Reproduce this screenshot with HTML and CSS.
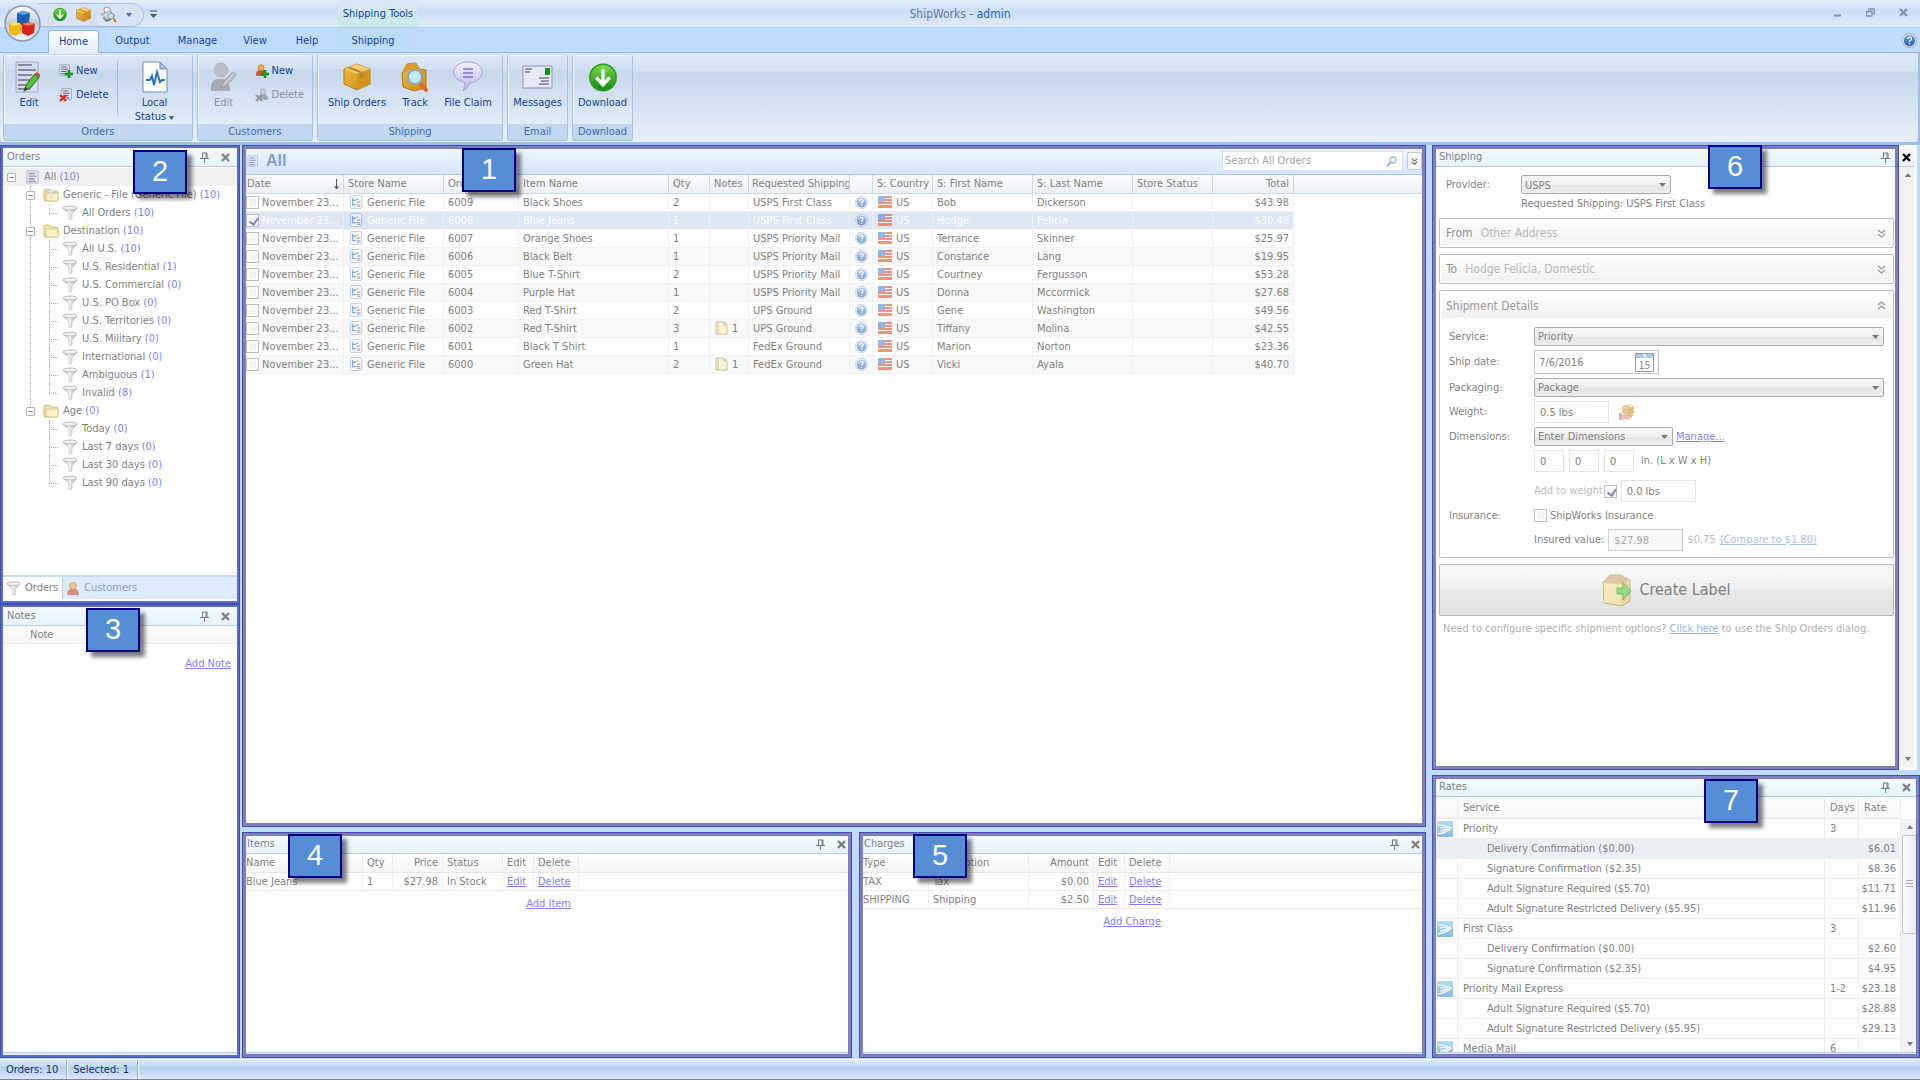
FILE: index.html
```html
<!DOCTYPE html>
<html lang="en">
<head>
<meta charset="utf-8">
<title>ShipWorks - admin</title>
<link rel="stylesheet" href="styles.css">
</head>
<body>
<svg class="defs" aria-hidden="true">
  <defs>
    <linearGradient id="gGreen" x1="0" y1="0" x2="0" y2="1"><stop offset="0" stop-color="#7bd94f"/><stop offset="1" stop-color="#128a10"/></linearGradient>
    <linearGradient id="gBox" x1="0" y1="0" x2="1" y2="1"><stop offset="0" stop-color="#f0bd4c"/><stop offset="1" stop-color="#c98a14"/></linearGradient>
    <linearGradient id="gOrb" x1="0" y1="0" x2="0" y2="1"><stop offset="0" stop-color="#fdfdfe"/><stop offset=".5" stop-color="#c3cbd9"/><stop offset="1" stop-color="#f4f7fb"/></linearGradient>
    <linearGradient id="gFun" x1="0" y1="0" x2="1" y2="0"><stop offset="0" stop-color="#8a8a8a"/><stop offset=".45" stop-color="#f2f2f2"/><stop offset="1" stop-color="#6f6f6f"/></linearGradient>
    <linearGradient id="gHelp" x1="0" y1="0" x2="0" y2="1"><stop offset="0" stop-color="#6aa5e6"/><stop offset="1" stop-color="#1c5aa8"/></linearGradient>
    <linearGradient id="gUsps" x1="0" y1="0" x2="0" y2="1"><stop offset="0" stop-color="#b3daf3"/><stop offset="1" stop-color="#84bbdf"/></linearGradient>
    <linearGradient id="gClaim" x1="0" y1="0" x2="0" y2="1"><stop offset="0" stop-color="#f6f3ff"/><stop offset="1" stop-color="#bdb2e8"/></linearGradient>
  </defs>
  <symbol id="down" viewBox="0 0 28 28"><circle cx="14" cy="14" r="13.5" fill="#2f9e25"/><circle cx="14" cy="14" r="12" fill="url(#gGreen)"/><path d="M14 6v14M7.500 14l6.500 7 6.500-7" fill="none" stroke="#fff" stroke-width="3.200"/></symbol>
  <symbol id="box" viewBox="0 0 28 28"><path d="M1 6 14 1l13 5v15L14 27 1 21z" fill="url(#gBox)" stroke="#b57a14"/><path d="M1 6l13 5 13-5-13-5z" fill="#f3cd72"/><path d="M14 11v16l13-6V6z" fill="#d09420"/><path d="M7 4l13 5v5l-3 1v-5L4 5z" fill="#b98424"/></symbol>
  <symbol id="track" viewBox="0 0 28 30"><path d="M1 12 6 2l9-1 3 6 7 1v18l-12 3-11-4z" fill="url(#gBox)" stroke="#b57a14"/><path d="M1 12 6 2l9-1 3 6-10 1z" fill="#d99c27"/><path d="M18 20l7 8" stroke="#e0662a" stroke-width="4" stroke-linecap="round"/><circle cx="14" cy="15" r="7" fill="#c4e9fa" stroke="#8fa9bc" stroke-width="2"/></symbol>
  <symbol id="doc" viewBox="0 0 16 16"><path d="M1 1h13v14H1z" fill="#dfe3f2" stroke="#9298b5"/><path d="M3 4h7M3 7h9M3 10h7M3 13h8" stroke="#5d628a" stroke-width="1.500"/></symbol>
  <symbol id="plus" viewBox="0 0 8 8"><path d="M3 0h2v3h3v2H5v3H3V5H0V3h3z" fill="#23a31b" stroke="#0b6a0b" stroke-width=".5"/></symbol>
  <symbol id="cross" viewBox="0 0 8 8"><path d="M1 1l6 6M7 1L1 7" stroke="#d8321c" stroke-width="2.400"/></symbol>
  <symbol id="pencil" viewBox="0 0 16 20"><path d="M1 19l2-6L11 3l4 3L7 16z" fill="#56c33c" stroke="#2b7b1e"/><path d="M11 3l2-2 4 3-2 2z" fill="#e2442c"/><path d="M1 19l1-4 2 2z" fill="#333"/></symbol>
  <symbol id="man" viewBox="0 0 16 16"><path d="M2 15q0-6 4-6h4q4 0 4 6z" fill="#dd5326" stroke="#a83c18"/><circle cx="8" cy="5" r="4" fill="#f5b04c" stroke="#b1701d"/></symbol>
  <symbol id="folder" viewBox="0 0 16 14"><path d="M1 3q0-2 2-2h3l2 2h6l1 1v8q0 1-1 1H2q-1 0-1-1z" fill="#e8cf6c" stroke="#b09232"/><path d="M3 5h12v8H3z" fill="#f9eba6" stroke="#bfa345"/></symbol>
  <symbol id="funnel" viewBox="0 0 16 16"><path d="M1 3l6 6v6l3-1V9l5-6z" fill="url(#gFun)" stroke="#777" stroke-width=".5"/><ellipse cx="8" cy="3" rx="7" ry="2" fill="#e6e6e6" stroke="#777" stroke-width=".8"/></symbol>
  <symbol id="store" viewBox="0 0 14 16"><rect x=".5" y=".5" width="13" height="15" rx="2" fill="#fff" stroke="#6f9ad0"/><path d="M3 3v8h4M3 6h4" fill="none" stroke="#1272d6" stroke-width="1.500"/><path d="M7 5h3M8 8h4M8 11h4M8 13h4" stroke="#777" stroke-width="1.500"/></symbol>
  <symbol id="help" viewBox="0 0 16 16"><circle cx="8" cy="8" r="7.500" fill="#eef2f8" stroke="#93a5bf"/><circle cx="8" cy="8" r="6" fill="url(#gHelp)"/><path d="M6 6.500q0-2 2-2t2 1.800q0 1-2 2.200v.7M8 10.500v1.600" fill="none" stroke="#fff" stroke-width="1.500"/></symbol>
  <symbol id="flag" viewBox="0 0 14 12"><path d="M0 0h14v12H0z" fill="#fff"/><path d="M0 1h14M0 4h14M0 7h14M0 10h14M0 12h14" stroke="#ee3b1c" stroke-width="1.800"/><path d="M0 0h7v6H0z" fill="#3b82cf"/></symbol>
  <symbol id="note" viewBox="0 0 13 14"><path d="M1 1h8l3 3v9H1z" fill="#fbf2b0" stroke="#9d9660"/><path d="M3 2v11" stroke="#a6a06e"/><path d="M9 1v3h3" fill="none" stroke="#9d9660"/></symbol>
  <symbol id="pin" viewBox="0 0 9 11"><path d="M2.500 1v5M6 1v5M7 1v5M2 1h5M0 6.500h9M4.500 7v4" fill="none" stroke="#777"/></symbol>
  <symbol id="close" viewBox="0 0 9 9"><path d="M1 1l7 7M8 1L1 8" stroke="currentColor" stroke-width="2.400"/></symbol>
  <symbol id="chev" viewBox="0 0 9 9"><path d="M1 1l3.500 3L8 1M1 5l3.500 3L8 5" fill="none" stroke="currentColor" stroke-width="1.300"/></symbol>
  <symbol id="usps" viewBox="0 0 16 16"><rect width="16" height="16" rx="1" fill="url(#gUsps)"/><path d="M1 4q8 0 13 3-5 5-13 6M3 7q5-1 8 0-3 3-8 3" fill="none" stroke="#fff" stroke-width="1.200"/></symbol>
  <symbol id="arrow" viewBox="0 0 6 4"><path d="M0 0h6L3 4z" fill="currentColor"/></symbol>
</svg>

<div class="app">
  <header class="top">
    <div class="titlebar">
      <button class="orb" aria-label="Application menu"><svg width="37" height="37" viewBox="0 0 37 37"><circle cx="18.500" cy="18.500" r="17.500" fill="url(#gOrb)" stroke="#8a9ab5" stroke-width="1.500"/><path d="M13 8l6-2 7 2-1 10-6 3-6-3z" fill="#1d5fb8"/><path d="M13 8l6-2 7 2-7 2z" fill="#5f9be4"/><path d="M5 19l6-2 6 2v9l-6 3-6-3z" fill="#f2b818"/><path d="M5 19l6-2 6 2-6 2z" fill="#fde36c"/><path d="M18 19l7-2 6 2-1 9-6 3-6-3z" fill="#d0271d"/><path d="M18 19l7-2 6 2-7 2z" fill="#f4776a"/></svg></button>
      <div class="quick">
        <button aria-label="Download"><svg width="14" height="15"><use href="#down"/></svg></button>
        <button aria-label="Ship"><svg width="15" height="15"><use href="#box"/></svg></button>
        <button aria-label="Preview"><svg width="17" height="16" viewBox="0 0 17 16"><path d="M4 1l5-1 2 5-6 2z" fill="#fff" stroke="#999"/><path d="M1 7l9-3 5 5-7 4z" fill="#d7dae0" stroke="#999"/><path d="M3 11l4 3 4-2" fill="none" stroke="#777" stroke-width="1.500"/><path d="M13 11l3 4" stroke="#e0662a" stroke-width="2"/><circle cx="11" cy="9" r="3" fill="#c4e9fa" stroke="#7892a6"/></svg></button>
        <svg width="6" height="4"><use href="#arrow"/></svg>
      </div>
      <svg class="more" width="7" height="8" viewBox="0 0 7 8"><path d="M0 1h7" stroke="#456"/><path d="M0 4h7L3.500 8z" fill="#456"/></svg>
      <div class="context">Shipping Tools</div>
      <h1>ShipWorks - <span>admin</span></h1>
      <div class="winbtns">
        <button aria-label="Minimize"><svg width="9" height="9" viewBox="0 0 9 9"><path d="M1 7.500h7" stroke="#7d93b2" stroke-width="2"/></svg></button>
        <button aria-label="Restore"><svg width="9" height="9" viewBox="0 0 9 9"><path d="M3 2.500V1h5.500v4.500H7M.5 3.500H6V8H.5z" fill="none" stroke="#7d93b2" stroke-width="1.400"/></svg></button>
        <button aria-label="Close"><svg width="9" height="9"><use href="#close"/></svg></button>
      </div>
    </div>
    <nav class="tabs">
      <button class="on">Home</button><button class="w67">Output</button><button class="w63">Manage</button><button class="w52">View</button><button class="w52">Help</button><button class="ctx">Shipping</button>
      <svg class="q" width="15" height="15"><use href="#help"/></svg>
    </nav>
    <div class="ribbon">
      <section class="grp">
        <div class="tools">
          <button class="big wa"><svg width="28" height="32" viewBox="0 0 28 32"><path d="M1 1h22v30H1z" fill="#d9dcec" stroke="#a4a8c0"/><path d="M3 4h14M3 9h18M3 14h14M3 19h14M3 24h9M3 28h12" stroke="#6b6f92" stroke-width="1.600"/><use href="#pencil" x="8" y="10" width="17" height="21"/></svg>Edit</button>
          <div class="pair">
            <button><svg width="14" height="16" viewBox="0 0 14 16"><use href="#doc" width="12" height="14"/><use href="#plus" x="6" y="7" width="8" height="8"/></svg>New</button>
            <button><svg width="14" height="16" viewBox="0 0 14 16"><use href="#doc" x="2" width="12" height="14"/><use href="#cross" y="7" width="8" height="8"/></svg>Delete</button>
          </div>
          <i class="sep"></i>
          <button class="big wb"><svg width="26" height="32" viewBox="0 0 26 32"><path d="M1 1h17l7 7v23H1z" fill="#fff" stroke="#7389b0"/><path d="M18 1v7h7z" fill="#a9c3ea" stroke="#7389b0"/><path d="M4 19h4l2-4 2 9 3-13 3 10 2-2h3" fill="none" stroke="#2272c2" stroke-width="2"/></svg><span>Local<br>Status <svg width="5" height="4"><use href="#arrow"/></svg></span></button>
        </div>
        <h2>Orders</h2>
      </section>
      <section class="grp">
        <div class="tools">
          <button class="big wc" disabled><svg width="28" height="32" viewBox="0 0 28 32"><path d="M1 30q-1-12 7-12h6q6 0 6 12z" fill="#a9adb3"/><circle cx="11" cy="9" r="7.500" fill="#b9bdc3"/><path d="M11 27l3-7 9-9 3 3-9 10z" fill="#c4c8cd" stroke="#989da4"/></svg>Edit</button>
          <div class="pair">
            <button><svg width="14" height="16" viewBox="0 0 14 16"><use href="#man" width="12" height="14"/><use href="#plus" x="6" y="7" width="8" height="8"/></svg>New</button>
            <button disabled><svg class="gray" width="14" height="16" viewBox="0 0 14 16"><use href="#man" x="2" width="12" height="14"/><use href="#cross" y="7" width="8" height="8"/></svg>Delete</button>
          </div>
        </div>
        <h2>Customers</h2>
      </section>
      <section class="grp">
        <div class="tools">
          <button class="big wd"><svg width="30" height="32"><use href="#box" y="2" height="28"/></svg>Ship Orders</button>
          <button class="big we"><svg width="28" height="32"><use href="#track"/></svg>Track</button>
          <button class="big wf"><svg width="30" height="32" viewBox="0 0 30 32"><path d="M15 1c19 0 18 20 1 21q-1 6-6 8 3-5 1-9C-5 17-1 1 15 1z" fill="url(#gClaim)" stroke="#a99ddb"/><path d="M10 8h10M10 12h10M10 16h10" stroke="#8172c4" stroke-width="1.500"/></svg>File Claim</button>
        </div>
        <h2>Shipping</h2>
      </section>
      <section class="grp">
        <div class="tools">
          <button class="big wg"><svg width="32" height="32" viewBox="0 0 32 32"><path d="M1 5h29v22H1z" fill="#e6e8f4" stroke="#8b90b0"/><path d="M3 8h7M3 11h5M17 17h10M19 20h8M17 23h10" stroke="#777c99" stroke-width="1.500"/><path d="M23 7h5v7h-5z" fill="#189018"/></svg>Messages</button>
        </div>
        <h2>Email</h2>
      </section>
      <section class="grp">
        <div class="tools">
          <button class="big wg"><svg width="30" height="32"><use href="#down" y="2" height="29"/></svg>Download</button>
        </div>
        <h2>Download</h2>
      </section>
    </div>
  </header>

  <main>
    <div class="col left">
      <section class="pane">
        <header class="bar"><h3>Orders</h3><button aria-label="Pin"><svg width="9" height="11"><use href="#pin"/></svg></button><button aria-label="Close"><svg width="9" height="9"><use href="#close"/></svg></button></header>
        <div class="tree grow">
          <div class="node root"><i></i><svg width="14" height="14"><use href="#doc"/></svg><span>All <b>(10)</b></span></div>
          <ul>
            <li><div class="node"><i></i><svg width="16" height="15" viewBox="0 0 16 15"><use href="#folder" width="16" height="14"/><use href="#funnel" x="3" y="1" width="10" height="10"/></svg><span>Generic - File (Generic File) <b>(10)</b></span></div>
              <ul><li><div class="node"><svg width="16" height="16"><use href="#funnel"/></svg><span>All Orders <b>(10)</b></span></div></li></ul></li>
            <li><div class="node"><i></i><svg width="16" height="14"><use href="#folder"/></svg><span>Destination <b>(10)</b></span></div>
              <ul>
                <li><div class="node"><svg width="16" height="16"><use href="#funnel"/></svg><span>All U.S. <b>(10)</b></span></div></li>
                <li><div class="node"><svg width="16" height="16"><use href="#funnel"/></svg><span>U.S. Residential <b>(1)</b></span></div></li>
                <li><div class="node"><svg width="16" height="16"><use href="#funnel"/></svg><span>U.S. Commercial <b>(0)</b></span></div></li>
                <li><div class="node"><svg width="16" height="16"><use href="#funnel"/></svg><span>U.S. PO Box <b>(0)</b></span></div></li>
                <li><div class="node"><svg width="16" height="16"><use href="#funnel"/></svg><span>U.S. Territories <b>(0)</b></span></div></li>
                <li><div class="node"><svg width="16" height="16"><use href="#funnel"/></svg><span>U.S. Military <b>(0)</b></span></div></li>
                <li><div class="node"><svg width="16" height="16"><use href="#funnel"/></svg><span>International <b>(0)</b></span></div></li>
                <li><div class="node"><svg width="16" height="16"><use href="#funnel"/></svg><span>Ambiguous <b>(1)</b></span></div></li>
                <li><div class="node"><svg width="16" height="16"><use href="#funnel"/></svg><span>Invalid <b>(8)</b></span></div></li>
              </ul></li>
            <li><div class="node"><i></i><svg width="16" height="14"><use href="#folder"/></svg><span>Age <b>(0)</b></span></div>
              <ul>
                <li><div class="node"><svg width="16" height="16"><use href="#funnel"/></svg><span>Today <b>(0)</b></span></div></li>
                <li><div class="node"><svg width="16" height="16"><use href="#funnel"/></svg><span>Last 7 days <b>(0)</b></span></div></li>
                <li><div class="node"><svg width="16" height="16"><use href="#funnel"/></svg><span>Last 30 days <b>(0)</b></span></div></li>
                <li><div class="node"><svg width="16" height="16"><use href="#funnel"/></svg><span>Last 90 days <b>(0)</b></span></div></li>
              </ul></li>
          </ul>
        </div>
        <div class="ptabs"><button class="on"><svg width="15" height="15"><use href="#funnel"/></svg>Orders</button><button><svg width="14" height="15"><use href="#man"/></svg>Customers</button></div>
        <div class="badge b2">2</div>
      </section>
      <section class="pane">
        <header class="bar"><h3>Notes</h3><button aria-label="Pin"><svg width="9" height="11"><use href="#pin"/></svg></button><button aria-label="Close"><svg width="9" height="9"><use href="#close"/></svg></button></header>
        <div class="grow">
          <div class="notehead"><span>Note</span></div>
          <p class="addnote"><a href="#">Add Note</a></p>
        </div>
        <div class="foot"></div>
        <div class="badge b3">3</div>
      </section>
    </div>

    <div class="col center">
      <section class="pane">
        <header class="allbar"><svg width="12" height="14"><use href="#doc"/></svg><h3>All</h3>
          <label class="search"><input type="text" placeholder="Search All Orders" aria-label="Search All Orders"><svg width="11" height="11" viewBox="0 0 11 11"><circle cx="7" cy="4" r="3" fill="#e4f0fb" stroke="#6a94c6" stroke-width="1.400"/><path d="M5 6L1 10" stroke="#5a80b0" stroke-width="1.800"/></svg></label>
          <button class="expand" aria-label="Advanced"><svg width="7" height="9"><use href="#chev"/></svg></button></header>
        <div class="grow">
          <table class="orders">
            <colgroup><col class="c97"><col class="c100"><col class="c75"><col class="c150"><col class="c41"><col class="c39"><col class="c101"><col class="c23"><col class="c60"><col class="c100"><col class="c100"><col class="c80"><col class="c81"><col></colgroup>
            <thead><tr><th class="sorted">Date<svg width="5" height="11" viewBox="0 0 5 11"><path d="M2.500 0v9M.5 7l2 3 2-3" fill="none" stroke="#555"/></svg></th><th>Store Name</th><th>Order #</th><th>Item Name</th><th>Qty</th><th>Notes</th><th class="snug">Requested Shipping</th><th></th><th>S: Country</th><th>S: First Name</th><th>S: Last Name</th><th>Store Status</th><th class="r">Total</th><th></th></tr></thead>
            <tbody>
              <tr><td><label><input type="checkbox">November 23...</label></td><td><svg width="14" height="14"><use href="#store"/></svg>Generic File</td><td>6009</td><td>Black Shoes</td><td>2</td><td></td><td>USPS First Class</td><td><svg width="13" height="13"><use href="#help"/></svg></td><td><svg width="14" height="12"><use href="#flag"/></svg>US</td><td>Bob</td><td>Dickerson</td><td></td><td class="r">$43.98</td><td></td></tr>
              <tr class="sel"><td><label><input type="checkbox" checked>November 23...</label></td><td><svg width="14" height="14"><use href="#store"/></svg>Generic File</td><td>6008</td><td>Blue Jeans</td><td>1</td><td></td><td>USPS First Class</td><td><svg width="13" height="13"><use href="#help"/></svg></td><td><svg width="14" height="12"><use href="#flag"/></svg>US</td><td>Hodge</td><td>Felicia</td><td></td><td class="r">$30.48</td><td></td></tr>
              <tr><td><label><input type="checkbox">November 23...</label></td><td><svg width="14" height="14"><use href="#store"/></svg>Generic File</td><td>6007</td><td>Orange Shoes</td><td>1</td><td></td><td>USPS Priority Mail</td><td><svg width="13" height="13"><use href="#help"/></svg></td><td><svg width="14" height="12"><use href="#flag"/></svg>US</td><td>Terrance</td><td>Skinner</td><td></td><td class="r">$25.97</td><td></td></tr>
              <tr><td><label><input type="checkbox">November 23...</label></td><td><svg width="14" height="14"><use href="#store"/></svg>Generic File</td><td>6006</td><td>Black Belt</td><td>1</td><td></td><td>USPS Priority Mail</td><td><svg width="13" height="13"><use href="#help"/></svg></td><td><svg width="14" height="12"><use href="#flag"/></svg>US</td><td>Constance</td><td>Lang</td><td></td><td class="r">$19.95</td><td></td></tr>
              <tr><td><label><input type="checkbox">November 23...</label></td><td><svg width="14" height="14"><use href="#store"/></svg>Generic File</td><td>6005</td><td>Blue T-Shirt</td><td>2</td><td></td><td>USPS Priority Mail</td><td><svg width="13" height="13"><use href="#help"/></svg></td><td><svg width="14" height="12"><use href="#flag"/></svg>US</td><td>Courtney</td><td>Fergusson</td><td></td><td class="r">$53.28</td><td></td></tr>
              <tr><td><label><input type="checkbox">November 23...</label></td><td><svg width="14" height="14"><use href="#store"/></svg>Generic File</td><td>6004</td><td>Purple Hat</td><td>1</td><td></td><td>USPS Priority Mail</td><td><svg width="13" height="13"><use href="#help"/></svg></td><td><svg width="14" height="12"><use href="#flag"/></svg>US</td><td>Donna</td><td>Mccormick</td><td></td><td class="r">$27.68</td><td></td></tr>
              <tr><td><label><input type="checkbox">November 23...</label></td><td><svg width="14" height="14"><use href="#store"/></svg>Generic File</td><td>6003</td><td>Red T-Shirt</td><td>2</td><td></td><td>UPS Ground</td><td><svg width="13" height="13"><use href="#help"/></svg></td><td><svg width="14" height="12"><use href="#flag"/></svg>US</td><td>Gene</td><td>Washington</td><td></td><td class="r">$49.56</td><td></td></tr>
              <tr><td><label><input type="checkbox">November 23...</label></td><td><svg width="14" height="14"><use href="#store"/></svg>Generic File</td><td>6002</td><td>Red T-Shirt</td><td>3</td><td><svg width="13" height="14"><use href="#note"/></svg>1</td><td>UPS Ground</td><td><svg width="13" height="13"><use href="#help"/></svg></td><td><svg width="14" height="12"><use href="#flag"/></svg>US</td><td>Tiffany</td><td>Molina</td><td></td><td class="r">$42.55</td><td></td></tr>
              <tr><td><label><input type="checkbox">November 23...</label></td><td><svg width="14" height="14"><use href="#store"/></svg>Generic File</td><td>6001</td><td>Black T Shirt</td><td>1</td><td></td><td>FedEx Ground</td><td><svg width="13" height="13"><use href="#help"/></svg></td><td><svg width="14" height="12"><use href="#flag"/></svg>US</td><td>Marion</td><td>Norton</td><td></td><td class="r">$23.36</td><td></td></tr>
              <tr><td><label><input type="checkbox">November 23...</label></td><td><svg width="14" height="14"><use href="#store"/></svg>Generic File</td><td>6000</td><td>Green Hat</td><td>2</td><td><svg width="13" height="14"><use href="#note"/></svg>1</td><td>FedEx Ground</td><td><svg width="13" height="13"><use href="#help"/></svg></td><td><svg width="14" height="12"><use href="#flag"/></svg>US</td><td>Vicki</td><td>Ayala</td><td></td><td class="r">$40.70</td><td></td></tr>
            </tbody>
          </table>
        </div>
        <div class="badge b1">1</div>
      </section>
      <div class="pairrow">
        <section class="pane">
          <header class="bar"><h3>Items</h3><button aria-label="Pin"><svg width="9" height="11"><use href="#pin"/></svg></button><button aria-label="Close"><svg width="9" height="9"><use href="#close"/></svg></button></header>
          <div class="grow">
            <table class="mini">
              <colgroup><col class="c117"><col class="c30"><col class="c50"><col class="c60"><col class="c31"><col class="c45"><col></colgroup>
              <thead><tr><th>Name</th><th>Qty</th><th class="r">Price</th><th>Status</th><th>Edit</th><th>Delete</th><th></th></tr></thead>
              <tbody><tr><td>Blue Jeans</td><td>1</td><td class="r">$27.98</td><td>In Stock</td><td><a href="#">Edit</a></td><td><a href="#">Delete</a></td><td></td></tr></tbody>
            </table>
            <p class="additem"><a href="#">Add Item</a></p>
          </div>
          <div class="foot"></div>
          <div class="badge b4">4</div>
        </section>
        <section class="pane">
          <header class="bar"><h3>Charges</h3><button aria-label="Pin"><svg width="9" height="11"><use href="#pin"/></svg></button><button aria-label="Close"><svg width="9" height="9"><use href="#close"/></svg></button></header>
          <div class="grow">
            <table class="mini">
              <colgroup><col class="c66"><col class="c100"><col class="c65"><col class="c31"><col class="c45"><col></colgroup>
              <thead><tr><th>Type</th><th>Description</th><th class="r">Amount</th><th>Edit</th><th>Delete</th><th></th></tr></thead>
              <tbody><tr><td>TAX</td><td>Tax</td><td class="r">$0.00</td><td><a href="#">Edit</a></td><td><a href="#">Delete</a></td><td></td></tr>
              <tr><td>SHIPPING</td><td>Shipping</td><td class="r">$2.50</td><td><a href="#">Edit</a></td><td><a href="#">Delete</a></td><td></td></tr></tbody>
            </table>
            <p class="addcharge"><a href="#">Add Charge</a></p>
          </div>
          <div class="foot"></div>
          <div class="badge b5">5</div>
        </section>
      </div>
    </div>

    <div class="col right">
      <section class="pane ship">
        <header class="bar"><h3>Shipping</h3><button aria-label="Pin"><svg width="9" height="11"><use href="#pin"/></svg></button><button class="dark" aria-label="Close"><svg width="9" height="9"><use href="#close"/></svg></button></header>
        <div class="scroller grow">
          <div class="form">
            <div class="prov"><label for="prov">Provider:</label><div><select id="prov"><option>USPS</option></select><p>Requested Shipping: USPS First Class</p></div></div>
            <button class="fold"><span>From</span><em>Other Address</em><svg width="9" height="9"><use href="#chev"/></svg></button>
            <button class="fold"><span>To</span><em>Hodge Felicia, Domestic</em><svg width="9" height="9"><use href="#chev"/></svg></button>
            <div class="details">
              <div class="dhead"><span>Shipment Details</span><svg class="flip" width="9" height="9"><use href="#chev"/></svg></div>
              <div class="fields">
                <div class="f"><label for="svc">Service:</label><select id="svc"><option>Priority</option></select></div>
                <div class="f date"><label for="sd">Ship date:</label><div class="datebox"><input id="sd" type="text" value="7/6/2016"><svg width="19" height="19" viewBox="0 0 19 19"><path d="M.5.5h18v18H.5z" fill="#fff" stroke="#999"/><path d="M1 1h17v4H1z" fill="#a9cbe6"/><circle cx="9.500" cy="2.500" r="1.200" fill="#fff"/><text x="9.500" y="15.500" text-anchor="middle" class="cal">15</text></svg></div></div>
                <div class="f"><label for="pk">Packaging:</label><select id="pk"><option>Package</option></select></div>
                <div class="f"><label for="wt">Weight:</label><input id="wt" class="w75" type="text" value="0.5 lbs"><svg class="scale" width="17" height="16" viewBox="0 0 17 16"><use href="#box" x="2" width="14" height="12"/><path d="M1 12q4-2 7 0l6-1-4 4H1z" fill="#f0a27a" stroke="#b5562c" stroke-width=".7"/><path d="M0 9h3v7H0z" fill="#8a96a8"/></svg></div>
                <div class="f"><label for="dm">Dimensions:</label><select id="dm" class="w139"><option>Enter Dimensions</option></select><a href="#" class="manage">Manage...</a></div>
                <div class="f dims"><span class="lab"></span><input type="text" value="0" aria-label="Length"><input type="text" value="0" aria-label="Width"><input type="text" value="0" aria-label="Height"><span>in. (L x W x H)</span></div>
                <div class="f addw"><span class="lab"></span><label class="muted inl">Add to weight<input type="checkbox" checked></label><input class="w75" type="text" value="0.0 lbs" aria-label="Added weight"></div>
                <div class="f"><span class="lab">Insurance:</span><label class="inl swi"><input type="checkbox">ShipWorks Insurance</label></div>
                <div class="f val"><span class="lab"></span><label for="iv" class="inl">Insured value:</label><input id="iv" class="w75" type="text" value="$27.98" disabled><span class="muted">$0.75</span><a href="#" class="cmp">(Compare to $1.80)</a></div>
              </div>
            </div>
            <button class="create"><svg width="30" height="34" viewBox="0 0 30 34"><path d="M1 9 8 2h10l10 5v21l-8 5-18-3z" fill="#eecb70" stroke="#b98f3a"/><path d="M1 9 8 2h10l10 5-8 4z" fill="#c9ac73"/><path d="M2 10l17 2v20L2 29z" fill="#fbe59b"/><path d="M15 15h6v-6l8 9-8 9v-6h-6z" fill="#5cd046" stroke="#3a9a2b"/></svg>Create Label</button>
            <p class="need">Need to configure specific shipment options? <a href="#">Click here</a> to use the Ship Orders dialog.</p>
          </div>
          <div class="sb"><svg width="6" height="4" class="flip"><use href="#arrow"/></svg><svg width="6" height="4"><use href="#arrow"/></svg></div>
        </div>
        <div class="badge b6">6</div>
      </section>
      <section class="pane rates">
        <header class="bar"><h3>Rates</h3><button aria-label="Pin"><svg width="9" height="11"><use href="#pin"/></svg></button><button aria-label="Close"><svg width="9" height="9"><use href="#close"/></svg></button></header>
        <div class="scroller grow">
          <div class="clip">
          <table class="rt">
            <colgroup><col class="c26"><col><col class="c34"><col class="c42"></colgroup>
            <thead><tr><th></th><th>Service</th><th>Days</th><th>Rate</th></tr></thead>
            <tbody>
              <tr><td><svg width="16" height="16"><use href="#usps"/></svg></td><td>Priority</td><td>3</td><td></td></tr>
              <tr class="sel"><td></td><td class="in">Delivery Confirmation ($0.00)</td><td></td><td>$6.01</td></tr>
              <tr><td></td><td class="in">Signature Confirmation ($2.35)</td><td></td><td>$8.36</td></tr>
              <tr><td></td><td class="in">Adult Signature Required ($5.70)</td><td></td><td>$11.71</td></tr>
              <tr><td></td><td class="in">Adult Signature Restricted Delivery ($5.95)</td><td></td><td>$11.96</td></tr>
              <tr><td><svg width="16" height="16"><use href="#usps"/></svg></td><td>First Class</td><td>3</td><td></td></tr>
              <tr><td></td><td class="in">Delivery Confirmation ($0.00)</td><td></td><td>$2.60</td></tr>
              <tr><td></td><td class="in">Signature Confirmation ($2.35)</td><td></td><td>$4.95</td></tr>
              <tr><td><svg width="16" height="16"><use href="#usps"/></svg></td><td>Priority Mail Express</td><td>1-2</td><td>$23.18</td></tr>
              <tr><td></td><td class="in">Adult Signature Required ($5.70)</td><td></td><td>$28.88</td></tr>
              <tr><td></td><td class="in">Adult Signature Restricted Delivery ($5.95)</td><td></td><td>$29.13</td></tr>
              <tr><td><svg width="16" height="16"><use href="#usps"/></svg></td><td>Media Mail</td><td>6</td><td></td></tr>
            </tbody>
          </table>
          </div>
          <div class="sb"><svg width="6" height="4" class="flip"><use href="#arrow"/></svg><i class="thumb"></i><svg width="6" height="4"><use href="#arrow"/></svg></div>
        </div>
        <div class="foot"></div>
        <div class="badge b7">7</div>
      </section>
    </div>
  </main>

  <footer class="status"><span>Orders: 10</span><span>Selected: 1</span></footer>
</div>
</body>
</html>
```
FILE: styles.css
```css
* { box-sizing: border-box; }
body { margin: 0; font: 11px/14px "DejaVu Sans Condensed", "DejaVu Sans", sans-serif; color: #7f7f7f; }
button, input, select { font: inherit; color: inherit; margin: 0; padding: 0; }
button { border: 0; background: none; }
h1, h2, h3, p, ul { margin: 0; padding: 0; font-size: 11px; font-weight: normal; }
ul { list-style: none; }
a { color: #7f7fff; }
svg { flex: none; }
.defs { position: absolute; width: 0; height: 0; }
.app { height: 100vh; display: flex; flex-direction: column; background: #bfdbff; overflow: hidden; }

/* Title bar and ribbon */
.top { color: #15428b; background: #9fbfe8; padding-bottom: 3px; }
.titlebar { position: relative; display: flex; align-items: center; height: 28px; border-bottom: 1px solid #b0cff7; background: linear-gradient(#e4effd, #cadef7 40%, #dfebfa); }
.orb { position: absolute; left: 4px; top: 5px; z-index: 2; height: 37px; }
.quick { display: flex; align-items: center; gap: 9px; height: 24px; margin: 3px 0 0 38px; padding: 0 11px 0 15px; border: 1px solid #a9c0de; border-left: 0; border-radius: 0 12px 12px 0; background: #d5e3f5; color: #5b7396; }
.quick button { height: 16px; }
.more { margin-left: 6px; }
.context { display: flex; align-items: center; justify-content: center; width: 80px; height: 27px; margin-left: 181px; background: linear-gradient(#d9e9fa, #c9e9e8); white-space: nowrap; }
h1 { position: absolute; left: 0; right: 0; top: 7px; text-align: center; font-size: 12px; color: #66788f; pointer-events: none; }
h1 span { color: #2463a8; }
.winbtns { display: flex; gap: 24px; margin-left: auto; padding-right: 12px; color: #7d93b2; }
.winbtns button { width: 9px; height: 20px; }
.tabs { display: flex; align-items: flex-end; height: 25px; padding-left: 48px; background: #bfdbff; border-bottom: 1px solid #8db2e3; }
.tabs button { height: 24px; padding-top: 2px; }
.tabs .on { width: 51px; height: 23px; padding-top: 0; border: 1px solid #8fb6e8; border-bottom: 0; border-radius: 3px 3px 0 0; background: linear-gradient(#fff, #e3edfa); margin-bottom: -1px; }
.w67 { width: 67px; }
.w63 { width: 63px; }
.w52 { width: 52px; }
.tabs .ctx { width: 80px; background: #bddcf8; }
.tabs .q { margin: 0 3px 4px auto; }
.ribbon { display: flex; gap: 4px; height: 89px; padding: 1px 3px 0; border-radius: 0 0 3px 3px; background: linear-gradient(#e1eaf5, #d3e1f1 18px, #c5d7ec 19px, #e8eff8); border-bottom: 1px solid #eef4fb; margin-right: 2px; }
.grp { display: flex; flex-direction: column; border: 1px solid #a5c1e2; border-top-color: #c6d7ea; border-radius: 3px; overflow: hidden; }
.tools { display: flex; flex: 1; align-items: flex-start; padding-top: 6px; background: linear-gradient(#dee8f5, #d1dfef 14px, #c7d8ed 15px, #e0ebf7); box-shadow: inset 1px 1px #f2f6fb; }
.grp h2 { height: 16px; line-height: 16px; text-align: center; color: #3e6aaa; background: #c1d8f0; }
.big { display: flex; flex-direction: column; align-items: center; gap: 3px; line-height: 14px; }
.wa { width: 50px; } .wb { width: 74px; } .wc { width: 52px; } .wd { width: 78px; } .we { width: 38px; } .wf { width: 68px; } .wg { width: 59px; }
.pair { display: flex; flex-direction: column; gap: 8px; padding: 2px 8px 0 5px; }
.pair button { display: flex; align-items: center; gap: 3px; height: 16px; }
.tools button:disabled { color: #8d9299; }
.gray { filter: grayscale(1) opacity(.5); }
.sep { width: 1px; height: 54px; background: #9ebbe0; }

/* Docked panes */
main { flex: 1; min-height: 0; display: grid; grid-template-columns: 240px minmax(0, 1fr) 488px; column-gap: 6px; padding-bottom: 1px; }
.col { display: grid; min-height: 0; }
.left { grid-template-rows: 459fr 454fr; }
.center { grid-template-rows: 682fr 226fr; row-gap: 5px; margin-left: -4px; }
.right { grid-template-rows: 625fr 283fr; row-gap: 5px; }
.pairrow { display: grid; grid-template-columns: 610fr 567fr; column-gap: 7px; min-height: 0; }
.pane { position: relative; display: flex; flex-direction: column; min-width: 0; min-height: 0; background: #fff; padding: 3px 4px 3px; }
.pane::after { content: ""; position: absolute; inset: 0; border: 4px solid rgba(0, 0, 128, .5); outline: 1px solid #4050b0; outline-offset: -1px; pointer-events: none; }
.left .pane { padding: 3px; }
.left .pane::after { border-width: 3px; border-color: #5f6dbf; }
.grow { flex: 1; min-height: 0; overflow: hidden; }
.bar { display: flex; align-items: center; gap: 12px; height: 19px; padding: 0 7px 0 4px; border-bottom: 1px solid #b7cce8; background: linear-gradient(#f6fafe, #e6f3fd); }
.center .bar { padding: 0 2px 0 1px; }
.bar h3 { flex: 1; }
.bar button { height: 11px; line-height: 0; display: flex; align-items: center; }
.foot { height: 3px; background: #dfecfb; border-top: 1px solid #b7cce8; }
.badge { position: absolute; z-index: 3; width: 54px; height: 44px; border: 2px solid #000080; background: #558ed5; color: #fff; font: 29px/38px "Liberation Sans", Arial, sans-serif; text-align: center; box-shadow: 5px 5px 4px rgba(0, 0, 0, .5); }
.b1 { left: 220px; top: 3px; }
.b2 { left: 133px; top: 5px; }
.b3 { left: 86px; top: 4px; }
.b4 { left: 46px; top: 2px; }
.b5 { left: 54px; top: 2px; }
.b6 { left: 276px; top: 0; }
.b7 { left: 272px; top: 4px; }

/* Filter tree */
.tree { padding-top: 1px; }
.node { display: flex; align-items: center; gap: 4px; height: 18px; white-space: nowrap; }
.node svg, .ptabs svg { opacity: .6; }
.node b { font-weight: normal; color: #7f7fff; }
.node i { width: 9px; height: 9px; border: 1px solid #b4b4b4; border-radius: 1px; background: linear-gradient(#8080b0, #8080b0) center / 5px 1px no-repeat #fff; margin: 0 4px 0 -4px; z-index: 1; }
.root { background: #f0f0f0; padding-left: 8px; }
.root i { margin-right: 6px; }
.tree ul { padding-left: 27px; }
.tree ul ul { padding-left: 19px; }
.tree li { position: relative; }
.tree li::before { content: ""; position: absolute; left: 0; top: 0; height: 100%; border-left: 1px dotted #aaa; }
.tree li:last-child::before { height: 9px; }
.tree li li::after { content: ""; position: absolute; left: 0; top: 9px; width: 9px; border-top: 1px dotted #aaa; }
.tree li li .node { padding-left: 13px; }
.ptabs { display: flex; height: 24px; margin-bottom: 2px; border-top: 2px solid #c9dcf3; background: #dfecff; }
.ptabs button { display: flex; align-items: center; gap: 4px; width: 60px; padding-left: 3px; }
.ptabs .on { background: #fff; border-right: 1px solid #b7cce8; color: #7f7f7f; }
.ptabs button + button { width: auto; color: #8aa0c4; }
.notehead { height: 18px; padding-left: 23px; border-bottom: 1px solid #ececec; background: linear-gradient(#fff, #f6f6f6); }
.notehead span { display: block; border-left: 1px solid #ececec; padding-left: 3px; line-height: 17px; }
.addnote { padding: 13px 6px 0 0; text-align: right; }

/* Order grid */
.allbar { display: flex; align-items: center; gap: 7px; height: 27px; padding: 0 0 0 1px; border-bottom: 1px solid #a9c5e6; background: linear-gradient(#eff6fe, #d5e6fd); }
.allbar svg { opacity: .6; }
.allbar h3 { flex: 1; font: bold 16px/20px "Liberation Sans", Arial, sans-serif; color: #879fc8; }
.search { display: flex; align-items: center; width: 181px; height: 20px; padding: 0 5px 0 2px; border: 1px solid #d6e1ee; background: #fff; }
.search input { flex: 1; min-width: 0; border: 0; background: none; }
.search input::placeholder { color: #a5a5a5; opacity: 1; }
.expand { width: 15px; height: 18px; border: 1px solid #c3cad4; border-radius: 2px; background: #f6f8fb; line-height: 0; margin-left: -3px; color: #000; }
table { border-collapse: separate; border-spacing: 0; table-layout: fixed; width: 100%; }
th, td { padding: 0 4px; text-align: left; font-weight: normal; white-space: nowrap; overflow: hidden; }
.r { text-align: right; }
.c23 { width: 23px; } .c26 { width: 26px; } .c30 { width: 30px; } .c31 { width: 31px; } .c34 { width: 34px; } .c39 { width: 39px; } .c41 { width: 41px; } .c42 { width: 42px; } .c45 { width: 45px; } .c50 { width: 50px; } .c60 { width: 60px; } .c65 { width: 65px; } .c66 { width: 66px; } .c75 { width: 75px; } .c80 { width: 80px; } .c81 { width: 81px; } .c97 { width: 98px; } .c100 { width: 100px; } .c101 { width: 101px; } .c117 { width: 117px; } .c150 { width: 150px; }
.orders th { height: 19px; border-right: 1px solid #cbd8e6; border-bottom: 1px solid #cbd8e6; background: linear-gradient(#fbfcfd, #eceff4); }
.orders th.snug { padding: 0 0 0 3px; }
.orders th:first-child { padding-left: 1px; }
.orders td:first-child { padding-left: 0; }
.sorted svg { float: right; margin-top: 2px; }
.orders td { height: 18px; border-right: 1px solid #edf2fa; border-bottom: 1px solid #edf2fa; line-height: 17px; }
.orders td:last-child, .orders th:last-child { border-right: 0; }
.orders tr:nth-child(even) td { background: #f9f9f9; }
.orders tr.sel:nth-child(even) td { background: #dee5f3; color: #fff; }
.orders tr:nth-child(n) td:last-child { background: #fff; border-bottom: 0; }
.orders td svg { vertical-align: middle; margin: -2px 4px 0 1px; opacity: .55; }
.orders td label { display: flex; align-items: center; gap: 3px; }
input[type="checkbox"] { appearance: none; flex: none; width: 13px; height: 13px; border: 1px solid #bdbdbd; background: #f4f4f4; box-shadow: inset 0 0 0 2px #fff; margin: 0; }
input[type="checkbox"]:checked::after { content: ""; display: block; width: 4px; height: 7px; margin: 1px 0 0 4px; border: solid #7f86b8; border-width: 0 2px 2px 0; transform: rotate(35deg); }
.mini th { height: 19px; border-right: 1px solid #ececec; border-bottom: 1px solid #e6e6e6; background: linear-gradient(#fff, #f6f6f6); }
.mini td { height: 18px; line-height: 17px; border-right: 1px solid #f0f0f0; border-bottom: 1px solid #ececec; }
.mini th:first-child, .mini td:first-child { padding-left: 0; }
.mini th:last-child, .mini td:last-child { border-right: 0; }
.additem { width: 325px; padding-top: 6px; text-align: right; }
.addcharge { width: 298px; padding-top: 6px; text-align: right; }

/* Shipping pane */
.right .pane { padding: 3px; }
.right .pane.ship { margin-right: 3px; }
.ship::after { right: 18px; }
.ship .bar { padding-right: 3px; }
.rates .bar { padding-right: 6px; }
.bar .dark { color: #000; }
.scroller { display: flex; }
.form { flex: 1; min-width: 0; padding: 8px 5px 0 4px; }
.sb { display: flex; flex-direction: column; justify-content: space-between; align-items: center; width: 17px; margin-right: -2px; padding: 6px 0; background: #f2f2f2; color: #777; }
.flip { transform: scaleY(-1); }
.prov { display: grid; grid-template-columns: 75px 150px; padding-left: 7px; line-height: 20px; height: 43px; }
.prov p { white-space: nowrap; }
select { appearance: none; display: block; width: 100%; height: 19px; padding: 0 3px; border: 1px solid #a9a9a9; border-radius: 2px; background: url("data:image/svg+xml,%3Csvg xmlns='http://www.w3.org/2000/svg' width='7' height='4'%3E%3Cpath d='M0 0h7L3.500 4z' fill='%23777'/%3E%3C/svg%3E") right 4px center no-repeat, linear-gradient(#f7f7f7, #f0f0f0 50%, #e4e4e4 51%, #eeeeee); }
.fold { display: flex; align-items: center; gap: 8px; width: 100%; height: 30px; margin-bottom: 6px; padding: 0 7px 0 6px; border: 1px solid #bfbfbf; border-radius: 2px; background: linear-gradient(#fff, #f0f0f0); box-shadow: inset 0 0 0 2px #fff; font-size: 12px; color: #8f8f8f; }
.fold em { flex: 1; text-align: left; font-style: normal; color: #b7b7b7; }
.fold svg { color: #999; }
.details { height: 268px; border: 1px solid #bfbfbf; border-radius: 2px; padding: 2px; }
.dhead { display: flex; align-items: center; justify-content: space-between; height: 25px; padding: 0 5px 0 4px; background: linear-gradient(#fff, #f0f0f0); font-size: 12px; color: #999; }
.fields { padding: 9px 7px 0; display: flex; flex-direction: column; gap: 4px; }
.f { display: flex; align-items: center; min-height: 19px; }
.f > label:first-child, .lab { flex: none; width: 85px; }
.f input[type="text"] { height: 22px; padding: 0 5px; border: 1px solid #e3e3e3; background: #fff; }
.f .w75 { width: 75px; }
.f .w139 { width: 139px; }
.f .datebox { display: flex; align-items: center; width: 125px; height: 24px; border: 1px solid #bdc4cc; padding-right: 4px; }
.f .datebox input { flex: 1; min-width: 0; border: 0; padding-left: 4px; }
.cal { font-size: 10px; fill: #888; }
.scale { margin-left: 10px; opacity: .6; }
.manage { margin-left: 3px; }
.f.dims { gap: 5px; }
.dims .lab { width: 80px; }
.dims input { width: 30px; }
.dims span:last-child { margin-left: 2px; }
.addw { padding-top: 4px; }
.inl { display: flex; align-items: center; gap: 1px; }
.addw .inl { margin-right: 4px; }
.muted { color: #bcbcbc; }
.swi { gap: 3px; }
.val .inl { margin-right: 4px; }
.f input:disabled { color: #aaa; background: #f7f7f7; border-color: #cfcfcf; }
.val .muted { margin: 0 4px; }
.cmp { color: #a9c1f3; }
.create { display: flex; align-items: center; justify-content: center; gap: 7px; width: 100%; height: 52px; margin: 6px 0; border: 1px solid #b5b5b5; border-radius: 2px; background: linear-gradient(#f9f9f9, #f0f0f0 50%, #e9e9e9 51%, #e2e2e2); font-size: 16px; }
.create svg { opacity: .6; }
.need { padding-left: 4px; color: #b0b0b0; white-space: nowrap; }
.need a { color: #8cb4e8; }

/* Rates */
.clip { flex: 1; min-width: 0; overflow: hidden; margin-left: -3px; }
.rt th { height: 22px; border-right: 1px solid #ececec; border-bottom: 1px solid #e6e6e6; background: linear-gradient(#fff, #f7f7f7); }
.rt td { height: 20px; border-right: 1px solid #ececec; border-bottom: 1px solid #ececec; }
.rt th, .rt td { padding-left: 5px; }
.rt td svg { display: block; }
.rt td:last-child { padding-left: 0; text-align: right; }
.rt .in { padding-left: 29px; }
.rt .sel td { background: #eaeff4; border-color: #eaeff4; }
.rates .sb { margin: 22px -1px 0 0; }
.thumb { width: 15px; height: 99px; margin: 6px 0 auto; border: 1px solid #c4c4c4; border-radius: 2px; background: repeating-linear-gradient(#aaa 0 1px, #f4f4f4 1px 3px) center / 7px 9px no-repeat, linear-gradient(90deg, #fafafa, #ececec); }

.status { flex: none; display: flex; height: 21px; border-top: 1px solid #fff; border-bottom: 1px solid #7f8894; background: linear-gradient(#d9e7f9, #c9ddf6 30%, #b5d0f1 40%, #dbe8fa); color: #15305f; line-height: 19px; }
.status span { padding: 0 8px 0 6px; border-right: 1px solid #8db2e3; box-shadow: 1px 0 #fff; }
```
